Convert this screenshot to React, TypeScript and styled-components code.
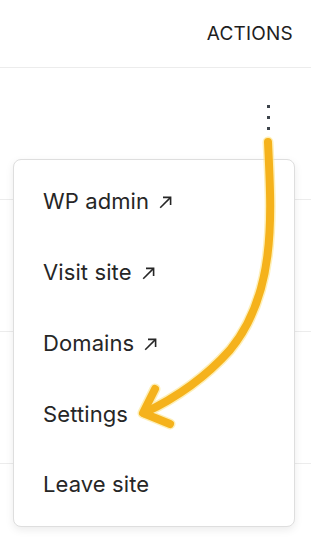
import styled, { createGlobalStyle } from "styled-components";

const GlobalStyle = createGlobalStyle`
  body {
    margin: 0;
    background: #ffffff;
    font-family: Inter, "Noto Sans", "Liberation Sans", sans-serif;
    color: #1e1e1e;
  }
`;

const Page = styled.div`
  position: relative;
  width: 311px;
  height: 540px;
  overflow: hidden;
  background: #ffffff;
`;

const HeaderRow = styled.div`
  height: 68px;
  box-sizing: border-box;
  display: flex;
  align-items: center;
  justify-content: flex-end;
  padding-right: 18px;
  border-bottom: 1px solid #ececec;
`;

const HeaderCell = styled.span`
  font-size: 19px;
  letter-spacing: 0.2px;
  color: #1e1e1e;
`;

const Row = styled.div`
  height: 132px;
  box-sizing: border-box;
  border-bottom: 1px solid #ececec;
  display: flex;
  justify-content: flex-end;
  align-items: flex-start;
  padding-right: 38px;
`;

const KebabButton = styled.button`
  margin-top: 37px;
  width: 10px;
  padding: 0;
  border: none;
  background: none;
  display: flex;
  flex-direction: column;
  align-items: center;
  gap: 8px;
`;

const Dot = styled.span`
  width: 3px;
  height: 3px;
  background: #3c434a;
`;

const Menu = styled.div`
  position: absolute;
  top: 159px;
  left: 13px;
  width: 282px;
  box-sizing: border-box;
  padding: 6px 0;
  background: #ffffff;
  border: 1px solid #dedede;
  border-radius: 8px;
  box-shadow: 0 3px 8px rgba(0, 0, 0, 0.08);
`;

const MenuItem = styled.div`
  height: 70.75px;
  display: flex;
  align-items: center;
  padding-left: 29px;
  font-size: 22px;
  letter-spacing: 0.1px;
  color: #262626;
`;

const External = styled.svg`
  width: 13px;
  height: 13px;
  margin-left: 10px;
  margin-top: 3px;
`;

const Overlay = styled.svg`
  position: absolute;
  top: 0;
  left: 0;
  width: 311px;
  height: 540px;
  pointer-events: none;
`;

const ExternalIcon = () => (
  <External viewBox="0 0 13 13" fill="none" stroke="#262626" strokeWidth="1.6">
    <path d="M1.2 11.8 L11.6 1.4" />
    <path d="M4 1.4 H11.6 V9" />
  </External>
);

const items = [
  { label: "WP admin", external: true },
  { label: "Visit site", external: true },
  { label: "Domains", external: true },
  { label: "Settings", external: false },
  { label: "Leave site", external: false },
];

export default function App() {
  return (
    <Page>
      <GlobalStyle />
      <HeaderRow>
        <HeaderCell>ACTIONS</HeaderCell>
      </HeaderRow>
      <Row>
        <KebabButton>
          <Dot />
          <Dot />
          <Dot />
        </KebabButton>
      </Row>
      <Row />
      <Row />
      <Row />
      <Menu>
        {items.map((item) => (
          <MenuItem key={item.label}>
            {item.label}
            {item.external && <ExternalIcon />}
          </MenuItem>
        ))}
      </Menu>
      <Overlay viewBox="0 0 311 540">
        <g fill="none" strokeLinecap="round" strokeLinejoin="round">
          <g stroke="#fde68a" strokeWidth="11" opacity="0.6">
            <path d="M268 142 C271 210 278 292 230 350 C205 378 176 398 144 413" />
            <path d="M155 389 L143 413 L170 424" />
          </g>
          <g stroke="#f5b21c" strokeWidth="8">
            <path d="M268 142 C271 210 278 292 230 350 C205 378 176 398 144 413" />
            <path d="M155 389 L143 413 L170 424" />
          </g>
        </g>
      </Overlay>
    </Page>
  );
}
